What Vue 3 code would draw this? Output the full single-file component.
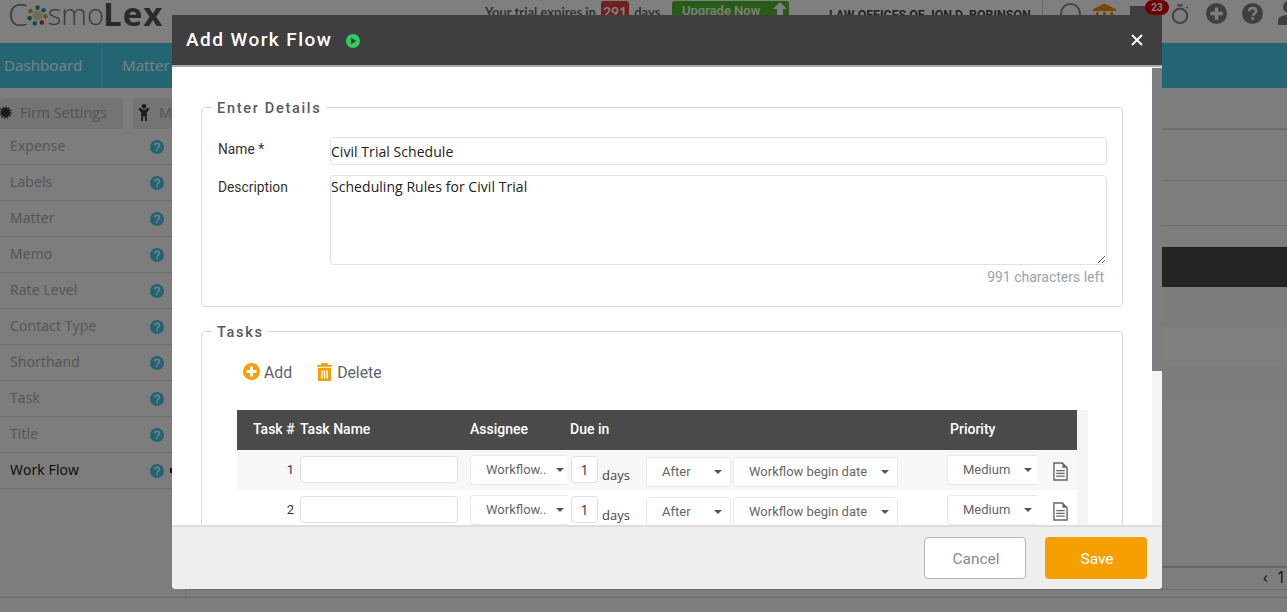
<script setup>
const sideItems = ['Expense', 'Labels', 'Matter', 'Memo', 'Rate Level', 'Contact Type', 'Shorthand', 'Task', 'Title', 'Work Flow']
const taskRows = [1, 2]
</script>

<template>
  <div class="page">
    <svg class="defs" width="0" height="0">
      <symbol id="q" viewBox="0 0 24 24">
        <circle cx="12" cy="12" r="12" fill="currentColor" />
        <path d="M8 9.3c.2-2.4 1.9-3.6 4.1-3.6 2.3 0 4 1.3 4 3.4 0 1.6-.9 2.4-2 3.1-1.1.7-1.6 1.1-1.6 2.4" fill="none" stroke="var(--q,#fff)" stroke-width="2.8" />
        <rect x="10.8" y="16.2" width="3" height="3" fill="var(--q,#fff)" />
      </symbol>
      <symbol id="p" viewBox="0 0 24 24">
        <circle cx="12" cy="12" r="12" fill="currentColor" />
        <path d="M10 5h4v5h5v4h-5v5h-4v-5H5v-4h5z" fill="var(--q,#fff)" />
      </symbol>
      <symbol id="doc" viewBox="0 0 16 20">
        <path d="M1 1h9l5 5v13H1z" fill="none" stroke="currentColor" stroke-width="1.5" />
        <path d="M10 1v5h5z" fill="currentColor" />
        <path d="M3.5 9h9M3.5 12h9M3.5 15h9" stroke="currentColor" stroke-width="1.3" />
      </symbol>
    </svg>

    <header class="top">
      <div class="logo">
        <span class="logo-c">C</span>
        <svg class="mark" viewBox="0 0 24 24" width="21" height="21">
          <circle cx="12" cy="12" r="5.5" fill="#d8d8a8" />
          <circle cx="12" cy="3" r="2.6" fill="#3f9d4a" />
          <circle cx="19" cy="6" r="2.6" fill="#2b8fc0" />
          <circle cx="21" cy="13" r="2.6" fill="#d9a326" />
          <circle cx="17" cy="20" r="2.6" fill="#c63b2d" />
          <circle cx="9" cy="21" r="2.6" fill="#2b8fc0" />
          <circle cx="3" cy="15" r="2.6" fill="#3f9d4a" />
          <circle cx="4" cy="7" r="2.6" fill="#d9a326" />
        </svg>
        <span>smo</span><b>Lex</b>
      </div>
      <div class="trial">
        Your trial expires in <span class="days-badge">291</span> days.
      </div>
      <div class="upgrade">
        <span>Upgrade Now</span>
        <svg class="up-arrow" viewBox="0 0 14 14" width="14" height="14"><path d="M7 0l7 7H10v7H4V7H0z" fill="#fff" /></svg>
      </div>
      <div class="firm">LAW OFFICES OF JON D. ROBINSON</div>
      <div class="tools">
        <span class="chat"></span>
        <svg class="bank" viewBox="0 0 24 20" width="23" height="20">
          <path d="M12 0l12 6v2H0V6zM3 9h3v7H3zM10.5 9h3v7h-3zM18 9h3v7h-3zM1 17h22v3H1z" fill="#f09000" />
        </svg>
        <span class="mail"><i class="mail-badge">23</i></span>
        <svg class="watch" viewBox="0 0 20 24" width="18" height="22">
          <circle cx="10" cy="14" r="8" fill="none" stroke="#8a8a8a" stroke-width="2.4" />
          <path d="M7 1h6v2.500H7z" fill="#8a8a8a" />
          <path d="M17 4l2 2" stroke="#8a8a8a" stroke-width="1.5" />
        </svg>
        <svg class="tool-icon"><use href="#p" /></svg>
        <svg class="tool-icon"><use href="#q" /></svg>
        <svg class="user" viewBox="0 0 14 24" width="14" height="24">
          <circle cx="11" cy="6" r="6" fill="#7d7f84" />
          <path d="M0 24v-4c0-4 4-6 11-6h3v10z" fill="#7d7f84" />
        </svg>
      </div>
    </header>

    <nav class="nav">
      <span class="nav-item first">Dashboard</span>
      <span class="nav-item">Matter</span>
    </nav>

    <div class="work">
      <aside class="side">
        <div class="tabs">
          <div class="tab firm-tab">
            <svg class="gear" viewBox="0 0 14 14" width="13" height="13">
              <circle cx="7" cy="7" r="5" fill="#333" />
              <circle cx="7" cy="7" r="5.900" fill="none" stroke="#333" stroke-width="1.800" stroke-dasharray="1.500 1.500" />
            </svg>
            Firm Settings
          </div>
          <div class="tab my-tab">
            <svg class="my-ic" viewBox="0 0 12 18" width="12" height="17"><path d="M6 0a2.500 2.500 0 110 5 2.500 2.500 0 010-5zM0 5l2-1 3 2h2l3-2 2 1-3 4v9H7v-5H5v5H3V9z" fill="#3a3a3a" /></svg>
            <span>My</span>
          </div>
        </div>
        <div v-for="item in sideItems" :key="item" class="side-row" :class="{ current: item === 'Work Flow' }">
          <span>{{ item }}</span>
          <svg class="side-q"><use href="#q" /></svg>
        </div>
      </aside>
      <main class="main">
        <div class="band b1"></div>
        <div class="band b2"></div>
        <div class="band b3"></div>
        <div class="band b4"></div>
        <div class="band dark"></div>
        <div class="band r1"></div>
        <div class="band r2"></div>
        <div class="band r3"></div>
        <div class="pager"><div class="pager-row"><span>‹ 1</span></div></div>
      </main>
    </div>

    <div class="overlay"></div>

    <section class="modal">
      <div class="modal-head">
        <h1>Add Work Flow</h1>
        <svg class="play" viewBox="0 0 16 16" width="14" height="14">
          <circle cx="8" cy="8" r="8" fill="#2ecc63" />
          <path d="M5.800 4.200l6 3.800-6 3.800z" fill="#3f3f41" />
        </svg>
        <svg class="close" viewBox="0 0 12 12" width="12" height="12">
          <path d="M1 1l10 10M11 1L1 11" stroke="#fff" stroke-width="1.800" />
        </svg>
      </div>

      <div class="modal-mid">
        <div class="scroller">
          <fieldset class="box details">
            <legend>Enter Details</legend>
            <div class="field">
              <label>Name *</label>
              <input class="txt" value="Civil Trial Schedule" />
            </div>
            <div class="field desc">
              <label>Description</label>
              <textarea class="txt area">Scheduling Rules for Civil Trial</textarea>
            </div>
            <div class="left">991 characters left</div>
          </fieldset>

          <fieldset class="box tasks">
            <legend>Tasks</legend>
            <div class="actions">
              <span class="action">
                <svg class="add-ic"><use href="#p" /></svg>Add
              </span>
              <span class="action">
                <svg class="del-ic" viewBox="0 0 16 19" width="15" height="18">
                  <path d="M5 0h6l1 2h4v2H0V2h4zM1 5h14v14H1zM4.500 7.500v9h1.500v-9zM7.250 7.500v9h1.500v-9zM10 7.500v9h1.500v-9z" fill="#f59f00" fill-rule="evenodd" />
                </svg>Delete
              </span>
            </div>
            <div class="table">
              <div class="grid thead">
                <span class="th-num">Task #</span>
                <span>Task Name</span>
                <span>Assignee</span>
                <span class="th-due">Due in</span>
                <span class="th-pri">Priority</span>
              </div>
              <div v-for="n in taskRows" :key="n" class="grid trow" :class="{ odd: n === 1 }">
                <span class="num">{{ n }}</span>
                <input class="cell-in" />
                <div class="sel clip tall"><span>Workflow..</span><i></i></div>
                <input class="cell-in count" value="1" />
                <span class="unit">days</span>
                <div class="sel low after"><span>After</span><i></i></div>
                <div class="sel low begin"><span>Workflow begin date</span><i></i></div>
                <div class="sel clip tall pri"><span>Medium</span><i></i></div>
                <svg class="doc"><use href="#doc" /></svg>
              </div>
            </div>
          </fieldset>
        </div>
        <div class="track"><div class="thumb"></div></div>
      </div>

      <div class="modal-foot">
        <button class="btn cancel">Cancel</button>
        <button class="btn save">Save</button>
      </div>
    </section>
  </div>
</template>

<style scoped>
.page {
  width: 1287px;
  height: 612px;
  overflow: hidden;
  background: #fafafa;
  font-family: "Open Sans", sans-serif;
  position: relative;
}
.defs { position: absolute; }

.top {
  height: 43px;
  display: flex;
  align-items: flex-start;
  background: #fff;
  color: #333;
  position: relative;
}
.top > * { flex: none; }
.logo {
  display: flex;
  align-items: center;
  height: 28px;
  margin-left: 8px;
  width: 477px;
  font: 300 29px/28px "Open Sans", sans-serif;
  color: #777;
}
.logo-c { font-size: 32px; }
.logo b { font-weight: 700; color: #555; font-size: 33px; letter-spacing: 1px; margin-left: -1px; }
.mark { margin: 2px 0 0 -1px; }
.trial {
  font: 700 13px/21px "Lato", sans-serif;
  color: #666;
  width: 187px;
  white-space: nowrap;
}
.days-badge {
  display: inline-block;
  width: 28px;
  height: 24px;
  margin: 1px 2px 0;
  border-radius: 3px;
  background: #e04040;
  color: #fff;
  text-align: center;
  font-size: 14px;
}
.upgrade {
  width: 117px;
  height: 24px;
  margin-top: 1px;
  border-radius: 3px;
  background: #4fb82f;
  color: #fff;
  font: 500 13px/20px "Roboto", sans-serif;
  padding: 0 2px 0 10px;
  box-sizing: border-box;
  white-space: nowrap;
  display: flex;
  justify-content: space-between;
}
.up-arrow { margin-top: 1px; }
.firm {
  margin: 7px 0 0 40px;
  width: 213px;
  font: 700 12.400px/16px "Roboto", sans-serif;
  color: #444;
  white-space: nowrap;
}
.tools {
  display: flex;
  align-items: center;
  height: 34px;
  padding-left: 17px;
  border-left: 1px solid #ccc;
  margin-top: -4px;
}
.tools > * { flex: none; }
.chat {
  width: 21px;
  height: 21px;
  border: 2px solid #8a8a8a;
  border-radius: 50%;
  box-sizing: border-box;
  margin-right: 12px;
}
.bank { margin-right: 14px; }
.mail {
  position: relative;
  width: 20px;
  height: 14px;
  background: #7d7f84;
  margin-right: 21px;
}
.mail-badge {
  position: absolute;
  left: 15px;
  top: -6px;
  width: 24px;
  height: 15px;
  border-radius: 9px;
  background: #e00000;
  color: #fff;
  font: 700 10px/15px "Roboto", sans-serif;
  text-align: center;
}
.watch { margin-right: 17px; margin-top: 2px; }
.tool-icon {
  width: 21px;
  height: 21px;
  color: #7d7f84;
  margin-right: 15px;
  --q: #fff;
}

.nav {
  height: 45px;
  background: #48cbe8;
  display: flex;
  align-items: center;
  color: #fff;
  font-size: 15.200px;
}
.nav-item { display: flex; align-items: center; height: 100%; padding-bottom: 2px; box-sizing: border-box; }
.nav-item.first { width: 102px; padding-left: 4px; border-right: 1px solid #6fd6ee; }
.nav-item:not(.first) { margin-left: 20px; }

.work { display: flex; height: 510px; border-bottom: 1px solid #d0d0d0; box-sizing: border-box; }
.side { width: 172px; flex: none; padding-top: 10px; box-sizing: border-box; }
.tabs { display: flex; height: 31px; gap: 10px; }
.tab {
  display: flex;
  align-items: center;
  background: #e9e9e9;
  border-radius: 4px 4px 0 0;
  color: #aaa;
  font-size: 14.300px;
  padding-bottom: 2px;
  box-sizing: border-box;
}
.firm-tab { width: 123px; flex: none; white-space: nowrap; }
.gear { margin: 0 8px 0 -1px; flex: none; }
.my-tab { flex: 1; min-width: 0; padding-left: 5px; gap: 9px; overflow: hidden; white-space: nowrap; }
.my-ic { flex: none; }
.side-row {
  height: 36px;
  display: flex;
  align-items: center;
  justify-content: space-between;
  padding: 0 8px 3px 10px;
  box-sizing: border-box;
  border-bottom: 1px solid #ddd;
  color: #aaa;
  font-size: 14px;
  letter-spacing: 0.1px;
  position: relative;
}
.side-row.current { color: #111; }
.side-row.current::after {
  content: "";
  position: absolute;
  left: 170px;
  top: 15px;
  width: 2px;
  height: 5px;
  background: #222;
}
.side-q { width: 14px; height: 14px; color: #46c8e8; --q: #fff; margin-top: 3px; }

.main { flex: 1; min-width: 0; display: flex; flex-direction: column; }
.band { flex: none; box-sizing: border-box; }
.b1 { height: 42px; border-bottom: 2px solid #dcdcdc; }
.b2 { height: 51px; border-bottom: 1px solid #dcdcdc; }
.b3 { height: 45px; border-bottom: 1px solid #dcdcdc; }
.b4 { height: 21px; border-bottom: 1px solid #f0f0f0; }
.dark { height: 40px; background: #484848; }
.r1 { height: 40px; background: #f8f8f8; }
.r2 { height: 40px; background: #fff; }
.r3 { height: 40px; background: #f8f8f8; }
.pager {
  margin: 159px 0 0 13px;
  flex: 1;
  border-top: 2px solid #ccc;
  border-left: 1px solid #ddd;
}
.pager-row {
  height: 21px;
  border-bottom: 1px solid #ddd;
  text-align: right;
  font: 16px/19px "Open Sans", sans-serif;
  word-spacing: 5px;
  padding-right: 1px;
  color: #222;
  white-space: nowrap;
}

.overlay {
  position: absolute;
  inset: 0;
  background: rgba(0, 0, 0, 0.5);
}

.modal {
  position: absolute;
  left: 172px;
  top: 15px;
  width: 990px;
  height: 574px;
  display: flex;
  flex-direction: column;
  background: #fff;
  border-radius: 0 0 4px 4px;
  overflow: hidden;
  font-family: "Roboto", sans-serif;
}
.modal-head {
  height: 52px;
  flex: none;
  box-sizing: border-box;
  background: #3f3f41;
  border-bottom: 2px solid #aaa;
  display: flex;
  align-items: center;
  padding: 0 19px 0 14px;
}
.modal-head h1 {
  margin: 0;
  font: 500 19px/24px "Roboto", sans-serif;
  letter-spacing: 1.450px;
  color: #fff;
}
.play { margin-left: 14px; margin-top: 2px; }
.close { margin-left: auto; }

.modal-mid { flex: 1; min-height: 0; display: flex; }
.scroller {
  flex: 1;
  min-width: 0;
  overflow: hidden;
  padding: 29px 29px 0;
  box-sizing: border-box;
}
.track { width: 10px; flex: none; background: #f4f4f4; }
.thumb { height: 303px; margin-top: 1px; background: #7d7e82; }

.box {
  margin: 0;
  min-width: 0;
  border: 1px solid #d9d9d9;
  border-radius: 4px;
}
.box legend {
  padding: 4px 5px 0;
  margin-left: -5px;
  font: 500 14.500px/18px "Roboto", sans-serif;
  letter-spacing: 1.700px;
  color: #555b66;
}
.details { height: 211px; padding: 19px 15px 0 15px; box-sizing: border-box; margin-bottom: 13px; }
.field { display: flex; margin-bottom: 10px; }
.field label {
  width: 113px;
  flex: none;
  padding: 3px 0 0 1px;
  font: 13.800px/18px "Roboto", sans-serif;
  color: #333;
  box-sizing: border-box;
}
.txt {
  flex: 1;
  min-width: 0;
  height: 28px;
  box-sizing: border-box;
  border: 1px solid #e2e2e2;
  border-radius: 4px;
  padding: 0;
  font: 14px/20px "Open Sans", sans-serif;
  letter-spacing: 0.05px;
  color: #222;
  outline: none;
  background: #fff;
}
.area { height: 90px; resize: vertical; line-height: 21px; }
.field.desc { margin-bottom: 3px; }
.left {
  text-align: right;
  padding-right: 3px;
  font: 14px/18px "Roboto", sans-serif;
  color: #9aa3ad;
}

.tasks { padding: 0 0 0 35px; height: 260px; box-sizing: border-box; }
.tasks legend { margin-left: -25px; }
.actions { display: flex; gap: 25px; height: 68px; padding: 19px 0 0 6px; box-sizing: border-box; }
.action {
  display: flex;
  align-items: center;
  height: 24px;
  font: 15.800px/24px "Roboto", sans-serif;
  color: #5c6470;
}
.add-ic { width: 17px; height: 17px; color: #f59f00; margin-right: 4px; margin-top: -3px; --q: #fff; }
.del-ic { margin-right: 5px; margin-top: -3px; }

.table { width: 851px; background: #f4f4f4; }
.grid {
  width: 840px;
  display: grid;
  grid-template-columns: 63px 170px 101px 31px 44px 87px 214px 106px 24px;
  box-sizing: border-box;
}
.thead {
  height: 40px;
  background: #4a4a4a;
  color: #fff;
  font: 500 14px/18px "Roboto", sans-serif;
  align-items: center;
  padding-bottom: 2px;
}
.th-num { padding-left: 16px; white-space: nowrap; }
.th-due { grid-column: 4 / 8; margin-left: -1px; }
.th-pri { padding-left: 3px; }
.trow { height: 40px; background: #fff; position: relative; }
.trow.odd { background: #f7f7f7; }
.num {
  text-align: right;
  padding-right: 6px;
  font: 13px/39px "Roboto", sans-serif;
  color: #333;
}
.cell-in {
  width: 158px;
  height: 27px;
  margin-top: 6px;
  box-sizing: border-box;
  border: 1px solid #e0e0e0;
  border-radius: 4px;
  background: #fff;
  outline: none;
  padding: 0;
}
.count {
  width: 27px;
  font: 14px "Open Sans", sans-serif;
  text-align: center;
  color: #333;
}
.unit { font: 13px/16px "Open Sans", sans-serif; color: #444; padding-top: 17px; }
.sel {
  display: flex;
  align-items: center;
  justify-content: space-between;
  box-sizing: border-box;
  background: #fff;
  border: 1px solid #e8e8e8;
  border-radius: 4px;
  padding: 0 3px 0 15px;
  font: 13px/18px "Roboto", sans-serif;
  color: #666;
  height: 30px;
  white-space: nowrap;
}
.sel i {
  width: 0;
  height: 0;
  border: 4px solid transparent;
  border-top: 4px solid #555;
  border-bottom: 0;
}
.tall { margin-top: 5px; }
.low { margin-top: 7px; }
.clip { border-right: 0; border-radius: 4px 0 0 4px; width: 97px; }
.pri { width: 90px; padding-right: 5px; }
.after { width: 85px; margin-right: 2px; padding-right: 8px; }
.begin { width: 165px; padding-right: 8px; }
.doc { width: 15px; height: 19px; margin-top: 12px; color: #666; grid-column: 9; }

.modal-foot {
  height: 64px;
  flex: none;
  box-sizing: border-box;
  background: #eee;
  border-top: 2px solid #ddd;
  display: flex;
  justify-content: flex-end;
  gap: 19px;
  padding: 10px 15px 0 0;
}
.btn {
  width: 102px;
  height: 42px;
  border-radius: 4px;
  font: 15.500px "Roboto", sans-serif;
  padding: 2px 0 0 2px;
}
.cancel { background: #fff; border: 1px solid #b5b5b5; color: #8a8a8a; }
.save { background: #f59f00; border: 0; color: #fff; }
</style>

<style>
html, body { margin: 0; overflow: hidden; }
</style>
